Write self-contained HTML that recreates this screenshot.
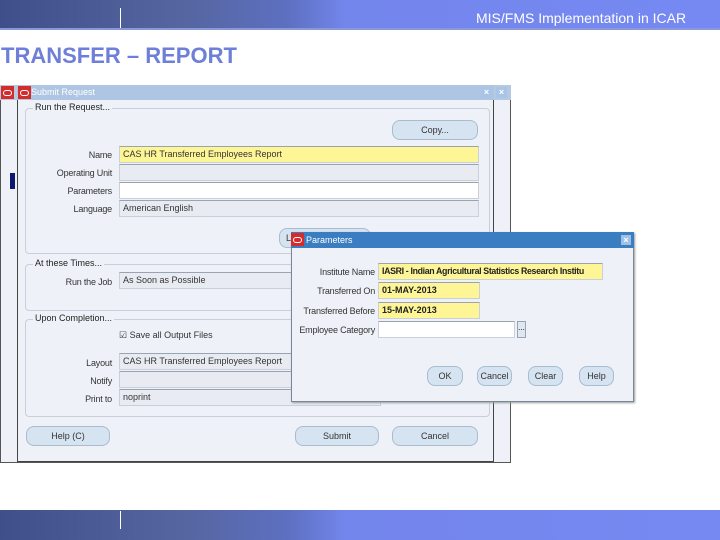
<!DOCTYPE html>
<html><head><style>
*{margin:0;padding:0;box-sizing:border-box}
body{width:720px;height:540px;background:#fff;position:relative;overflow:hidden;font-family:"Liberation Sans",sans-serif}
.a{position:absolute}
.ban{background:linear-gradient(90deg,#3e4f8a 0%,#55659f 25%,#5d70c0 40%,#7386ec 48%,#7688f2 100%)}
.lbl{position:absolute;font-size:9px;color:#333;text-align:right;letter-spacing:-0.2px}
.f{position:absolute;height:17px;border:1px solid #c9d0da;border-top-color:#9aa3b0;font-size:9px;color:#333;padding:2px 3px;white-space:nowrap;overflow:hidden}
.y{background:#fdf596}.g{background:#e8ecf2}.w{background:#fff}
.btn{position:absolute;height:20px;border:1px solid #a9bccf;border-radius:8px;background:#d6e3f1;font-size:9px;color:#333;text-align:center;line-height:18px}
.grp{position:absolute;border:1px solid #c9cfd8;border-radius:4px}
.gt{position:absolute;font-size:9px;color:#222;background:#eef2f8;padding:0 2px}
.ic{position:absolute;width:13px;height:13px;background:#d42b2b}
.ic:after{content:"";position:absolute;left:2px;top:4px;width:7px;height:4px;border:1.5px solid #fff;border-radius:3px}
</style></head><body>
<div class="a ban" style="left:0;top:0;width:720px;height:29px"></div>
<div class="a" style="left:120px;top:8px;width:1px;height:21px;background:#fff"></div>
<div class="a" style="left:0;top:28px;width:720px;height:2px;background:#8a98d8"></div>
<div class="a" style="left:476px;top:10px;font-size:14px;color:#fff">MIS/FMS Implementation in ICAR</div>
<div class="a" style="left:1px;top:43px;font-size:22px;font-weight:bold;color:#6d7fd8">TRANSFER – REPORT</div>
<div class="a ban" style="left:0;top:510px;width:720px;height:30px"></div>
<div class="a" style="left:120px;top:511px;width:1px;height:18px;background:#fff"></div>

<div class="a" style="left:0;top:85px;width:511px;height:378px;background:#eef2f8;border:1px solid #555"></div>
<div class="a" style="left:0;top:85px;width:511px;height:15px;background:#b5c9e1"></div>
<div class="ic" style="left:1px;top:86px"></div>
<div class="a" style="left:10px;top:173px;width:5px;height:16px;background:#0c1870"></div>
<div class="a" style="left:496px;top:87px;width:11px;height:11px;background:#a9c4e6;color:#fff;font-size:9px;font-weight:bold;text-align:center;line-height:11px">×</div>

<div class="a" style="left:17px;top:85px;width:477px;height:377px;background:#eef2f8;border:1px solid #444"></div>
<div class="a" style="left:17px;top:85px;width:477px;height:15px;background:#aec6e3"></div>
<div class="ic" style="left:18px;top:86px"></div>
<div class="a" style="left:31px;top:87px;font-size:9px;color:#fff">Submit Request</div>
<div class="a" style="left:481px;top:87px;width:11px;height:11px;background:#a9c4e6;color:#fff;font-size:9px;font-weight:bold;text-align:center;line-height:11px">×</div>

<div class="grp" style="left:25px;top:108px;width:465px;height:146px"></div>
<div class="gt" style="left:33px;top:102px">Run the Request...</div>
<div class="btn" style="left:392px;top:120px;width:86px">Copy...</div>
<div class="lbl" style="left:30px;top:150px;width:82px">Name</div>
<div class="f y" style="left:119px;top:146px;width:360px">CAS HR Transferred Employees Report</div>
<div class="lbl" style="left:30px;top:168px;width:82px">Operating Unit</div>
<div class="f g" style="left:119px;top:164px;width:360px"></div>
<div class="lbl" style="left:30px;top:186px;width:82px">Parameters</div>
<div class="f w" style="left:119px;top:182px;width:360px"></div>
<div class="lbl" style="left:30px;top:204px;width:82px">Language</div>
<div class="f g" style="left:119px;top:200px;width:360px">American English</div>
<div class="btn" style="left:279px;top:228px;width:92px;text-align:left;padding-left:6px">L</div>

<div class="grp" style="left:25px;top:264px;width:465px;height:47px"></div>
<div class="gt" style="left:33px;top:258px">At these Times...</div>
<div class="lbl" style="left:30px;top:277px;width:82px">Run the Job</div>
<div class="f g" style="left:119px;top:272px;width:360px">As Soon as Possible</div>

<div class="grp" style="left:25px;top:319px;width:465px;height:98px"></div>
<div class="gt" style="left:33px;top:313px">Upon Completion...</div>
<div class="a" style="left:119px;top:330px;font-size:9px;color:#333">☑ Save all Output Files</div>
<div class="lbl" style="left:30px;top:358px;width:82px">Layout</div>
<div class="f g" style="left:119px;top:353px;width:360px">CAS HR Transferred Employees Report</div>
<div class="lbl" style="left:30px;top:376px;width:82px">Notify</div>
<div class="f g" style="left:119px;top:371px;width:360px"></div>
<div class="lbl" style="left:30px;top:394px;width:82px">Print to</div>
<div class="f g" style="left:119px;top:389px;width:262px">noprint</div>
<div class="btn" style="left:26px;top:426px;width:84px">Help (C)</div>
<div class="btn" style="left:295px;top:426px;width:84px">Submit</div>
<div class="btn" style="left:392px;top:426px;width:86px">Cancel</div>

<div class="a" style="left:291px;top:232px;width:343px;height:170px;background:#eef2f8;border:1px solid #7a8797;box-shadow:1px 1px 2px #999"></div>
<div class="a" style="left:291px;top:232px;width:343px;height:16px;background:#3a7dc0"></div>
<div class="ic" style="left:291px;top:233px"></div>
<div class="a" style="left:306px;top:235px;font-size:9px;color:#fff">Parameters</div>
<div class="a" style="left:621px;top:235px;width:10px;height:10px;background:#9fc0e6;color:#fff;font-size:9px;font-weight:bold;text-align:center;line-height:10px">×</div>
<div class="lbl" style="left:280px;top:267px;width:95px">Institute Name</div>
<div class="f y" style="left:378px;top:263px;width:225px;font-weight:bold;font-size:8.8px;letter-spacing:-0.35px;color:#222">IASRI - Indian Agricultural Statistics Research Institu</div>
<div class="lbl" style="left:280px;top:286px;width:95px">Transferred On</div>
<div class="f y" style="left:378px;top:282px;width:102px;font-weight:bold;color:#222">01-MAY-2013</div>
<div class="lbl" style="left:280px;top:306px;width:95px">Transferred Before</div>
<div class="f y" style="left:378px;top:302px;width:102px;font-weight:bold;color:#222">15-MAY-2013</div>
<div class="lbl" style="left:280px;top:325px;width:95px">Employee Category</div>
<div class="f w" style="left:378px;top:321px;width:137px"></div>
<div class="a" style="left:517px;top:321px;width:9px;height:17px;border:1px solid #9aa3b0;background:#dfe8f2;font-size:8px;text-align:center;line-height:12px">...</div>
<div class="btn" style="left:427px;top:366px;width:36px">OK</div>
<div class="btn" style="left:477px;top:366px;width:35px">Cancel</div>
<div class="btn" style="left:528px;top:366px;width:35px">Clear</div>
<div class="btn" style="left:579px;top:366px;width:35px">Help</div>
</body></html>
